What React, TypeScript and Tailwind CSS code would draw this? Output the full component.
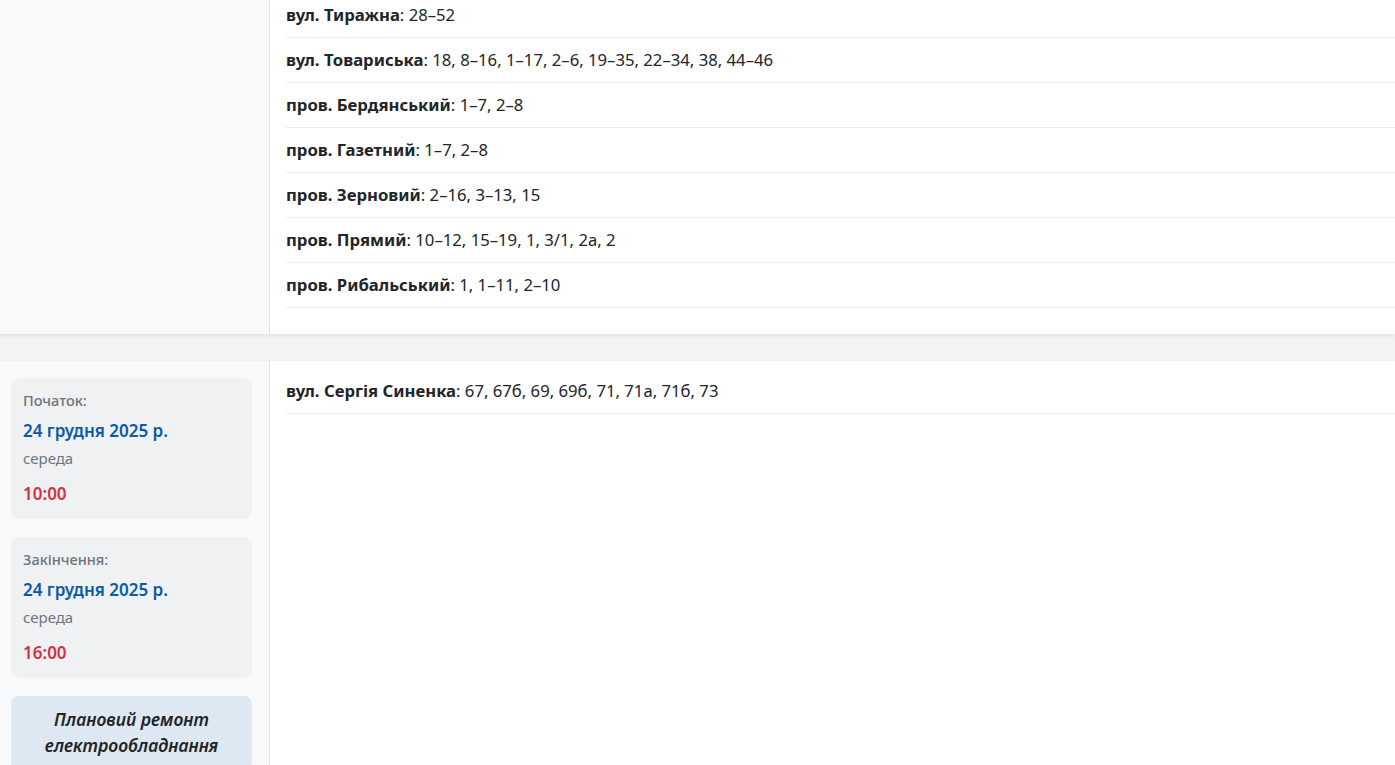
import React from "react";

type Street = { name: string; houses: string };

const topStreets: Street[] = [
  { name: "вул. Тиражна", houses: "28–52" },
  { name: "вул. Товариська", houses: "18, 8–16, 1–17, 2–6, 19–35, 22–34, 38, 44–46" },
  { name: "пров. Бердянський", houses: "1–7, 2–8" },
  { name: "пров. Газетний", houses: "1–7, 2–8" },
  { name: "пров. Зерновий", houses: "2–16, 3–13, 15" },
  { name: "пров. Прямий", houses: "10–12, 15–19, 1, 3/1, 2а, 2" },
  { name: "пров. Рибальський", houses: "1, 1–11, 2–10" },
];

const bottomStreets: Street[] = [
  { name: "вул. Сергія Синенка", houses: "67, 67б, 69, 69б, 71, 71а, 71б, 73" },
];

function StreetRow({ street }: { street: Street }) {
  return (
    <div className="py-[10px] leading-6 border-b border-[#e9ecef] text-[16.7px]">
      <span className="font-bold">{street.name}</span>
      <span>: {street.houses}</span>
    </div>
  );
}

function TimeBox({ label, date, day, time }: { label: string; date: string; day: string; time: string }) {
  return (
    <div className="bg-[#f0f1f3] rounded-lg px-3 pt-3 pb-3">
      <div className="text-[14.5px] leading-5 font-medium text-[#6c757d]">{label}</div>
      <div className="mt-2 text-[17px] leading-[26px] font-semibold text-[#0b5aa8]">{date}</div>
      <div className="mt-[3px] text-[15px] leading-[22px] text-[#6c757d]">{day}</div>
      <div className="mt-3 text-[17px] leading-[26px] font-semibold text-[#d4323f]">{time}</div>
    </div>
  );
}

export default function App() {
  return (
    <div className="min-h-screen bg-[#f3f3f3] text-[#212529] font-['Noto_Sans','Open_Sans',sans-serif] overflow-hidden">
      <div className="-mt-[7px] flex flex-col gap-[27px]">
        {/* outage card (scrolled) */}
        <div className="flex bg-white shadow-[0_2px_4px_rgba(0,0,0,0.08)]">
          <div className="w-[270px] shrink-0 bg-[#f8f9fa] border-r border-[#dee2e6]" />
          <div className="flex-1 pl-4 pb-[26px]">
            {topStreets.map((s) => (
              <StreetRow key={s.name} street={s} />
            ))}
          </div>
        </div>

        {/* outage card */}
        <div className="flex bg-white shadow-[0_2px_4px_rgba(0,0,0,0.08)] min-h-[420px]">
          <div className="w-[270px] shrink-0 bg-[#f8f9fa] border-r border-[#dee2e6] pl-[11px] pr-[17px] pt-[17px] flex flex-col gap-[18px]">
            <TimeBox label="Початок:" date="24 грудня 2025 р." day="середа" time="10:00" />
            <TimeBox label="Закінчення:" date="24 грудня 2025 р." day="середа" time="16:00" />
            <div className="bg-[#dee8f2] rounded-lg px-3 pt-[10px] pb-3 text-center italic font-semibold text-[17.5px] leading-[26px] text-[#212529]">
              Плановий ремонт електрообладнання
            </div>
          </div>
          <div className="flex-1 pl-4 pt-2">
            {bottomStreets.map((s) => (
              <StreetRow key={s.name} street={s} />
            ))}
          </div>
        </div>
      </div>
    </div>
  );
}
